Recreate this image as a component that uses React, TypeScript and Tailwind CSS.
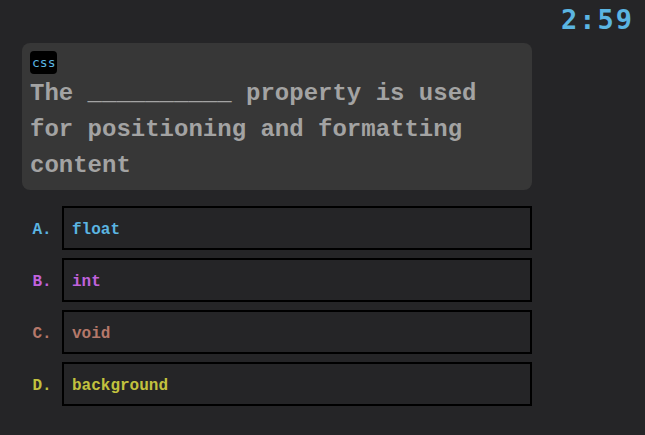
const options = [
  { key: 'A', text: 'float', color: 'text-[#5bb5e2]' },
  { key: 'B', text: 'int', color: 'text-[#c062dc]' },
  { key: 'C', text: 'void', color: 'text-[#b5786a]' },
  { key: 'D', text: 'background', color: 'text-[#c2c23e]' },
];

export default function App() {
  return (
    <div className="w-[645px] h-[435px] bg-[#252527] overflow-hidden font-['Liberation_Mono','Courier_New',monospace]">
      {/* timer */}
      <div className="h-[43px] flex justify-end items-start pr-[11px] pt-[2px]">
        <span className="font-['DejaVu_Sans_Mono',monospace] text-[27px] font-bold leading-9 tracking-[2px] text-[#5bb5e2]">
          2:59
        </span>
      </div>

      <div className="ml-[22px] w-[510px]">
        {/* question card */}
        <div className="bg-[#373737] rounded-lg pt-2 px-2 pb-[6px]">
          <div className="flex">
            <span className="h-[23px] px-[2px] bg-black rounded flex items-center font-['DejaVu_Sans_Mono',monospace] text-[13px] text-[#5bb5e2]">
              css
            </span>
          </div>
          <p className="pt-[2px] text-2xl leading-9 font-bold text-[#a3a3a3]">
            The __________ property is used for positioning and formatting content
          </p>
        </div>

        {/* answers */}
        <div className="mt-4 flex flex-col gap-2">
          {options.map((o) => (
            <div key={o.key} className="flex items-center pt-[3px]">
              <span className={`w-10 text-center text-base font-bold ${o.color}`}>{o.key}.</span>
              <div className="flex-1 h-11 -mt-[3px] border-2 border-black flex items-center pl-2 pt-[3px]">
                <span className={`text-base font-bold ${o.color}`}>{o.text}</span>
              </div>
            </div>
          ))}
        </div>
      </div>
    </div>
  );
}
